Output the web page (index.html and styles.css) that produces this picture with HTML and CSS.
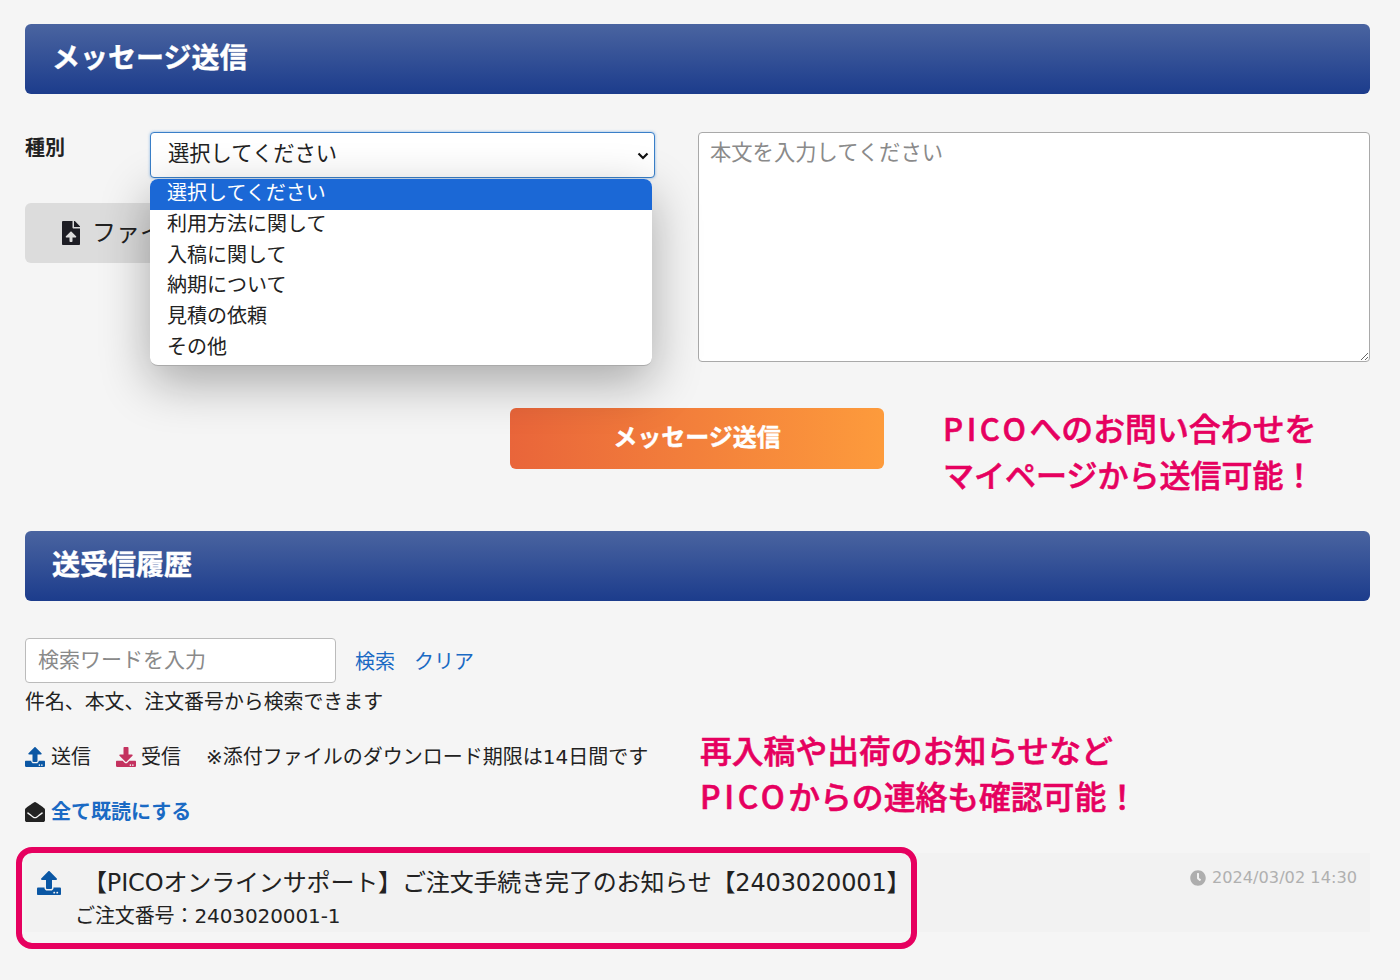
FILE: index.html
```html
<!DOCTYPE html>
<html lang="ja">
<head>
    <meta charset="UTF-8">
    <title>メッセージ送信</title>
    <link rel="stylesheet" href="styles.css">
</head>
<body>
    <!-- icon sprite -->
    <svg class="sprite" xmlns="http://www.w3.org/2000/svg">
        <symbol id="i-upload" viewBox="0 0 512 512"><path d="M296 384h-80c-13.3 0-24-10.7-24-24V192h-87.7c-17.8 0-26.7-21.5-14.1-34.1L242.3 5.7c7.5-7.5 19.8-7.5 27.3 0l152.2 152.2c12.6 12.6 3.7 34.1-14.1 34.1H320v168c0 13.3-10.7 24-24 24zm216-8v112c0 13.3-10.7 24-24 24H24c-13.3 0-24-10.7-24-24V376c0-13.3 10.7-24 24-24h136v8c0 30.9 25.1 56 56 56h80c30.9 0 56-25.1 56-56v-8h136c13.3 0 24 10.7 24 24zm-124 88c0-11-9-20-20-20s-20 9-20 20 9 20 20 20 20-9 20-20zm64 0c0-11-9-20-20-20s-20 9-20 20 9 20 20 20 20-9 20-20z"/></symbol>
        <symbol id="i-download" viewBox="0 0 512 512"><path d="M216 0h80c13.3 0 24 10.7 24 24v168h87.7c17.8 0 26.7 21.5 14.1 34.1L269.7 378.3c-7.5 7.5-19.8 7.5-27.3 0L90.1 226.1c-12.6-12.6-3.7-34.1 14.1-34.1H192V24c0-13.3 10.7-24 24-24zm296 376v112c0 13.3-10.7 24-24 24H24c-13.3 0-24-10.7-24-24V376c0-13.3 10.7-24 24-24h146.7l49 49c20.1 20.1 52.5 20.1 72.6 0l49-49H488c13.3 0 24 10.7 24 24zm-124 88c0-11-9-20-20-20s-20 9-20 20 9 20 20 20 20-9 20-20zm64 0c0-11-9-20-20-20s-20 9-20 20 9 20 20 20 20-9 20-20z"/></symbol>
        <symbol id="i-envelope" viewBox="0 0 512 512"><path d="M512 464c0 26.51-21.49 48-48 48H48c-26.51 0-48-21.49-48-48V200.724a48 48 0 0 1 18.387-37.776c24.913-19.529 45.501-35.365 164.2-121.511C199.412 29.17 232.797-.347 256 .003c23.198-.354 56.596 29.172 73.413 41.433 118.687 86.137 139.303 101.995 164.2 121.512A48 48 0 0 1 512 200.724V464zm-65.666-196.605c-2.563-3.728-7.7-4.595-11.339-1.907-22.845 16.873-55.462 40.705-105.582 77.079-16.825 12.266-50.21 41.781-73.413 41.43-23.211.344-56.559-29.143-73.413-41.43-50.114-36.37-82.734-60.204-105.582-77.079-3.639-2.688-8.776-1.821-11.339 1.907l-9.072 13.196a7.998 7.998 0 0 0 1.839 10.967c22.887 16.899 55.454 40.69 105.303 76.868 20.274 14.781 56.524 47.813 92.264 47.573 35.724.242 71.961-32.771 92.263-47.573 49.85-36.179 82.418-59.97 105.303-76.868a7.998 7.998 0 0 0 1.839-10.967l-9.071-13.196z"/></symbol>
        <symbol id="i-clock" viewBox="0 0 512 512"><path d="M256,8C119,8,8,119,8,256S119,504,256,504,504,393,504,256,393,8,256,8Zm92.49,313h0l-20,25a16,16,0,0,1-22.49,2.5h0l-67-49.72a40,40,0,0,1-15-31.23V112a16,16,0,0,1,16-16h32a16,16,0,0,1,16,16V256l58,42.5A16,16,0,0,1,348.49,321Z"/></symbol>
        <symbol id="i-file" viewBox="0 0 384 512"><path d="M224 136V0H24C10.7 0 0 10.7 0 24v464c0 13.3 10.7 24 24 24h336c13.3 0 24-10.7 24-24V160H248c-13.2 0-24-10.8-24-24zm65.18 216.01H224v80c0 8.84-7.16 16-16 16h-32c-8.84 0-16-7.16-16-16v-80H94.82c-14.28 0-21.41-17.29-11.27-27.36l96.42-95.7c6.65-6.61 17.39-6.61 24.04 0l96.42 95.7c10.15 10.07 3.03 27.36-11.25 27.36zM377 105L279.1 7c-4.5-4.5-10.6-7-17-7H256v128h128v-6.1c0-6.3-2.5-12.4-7-16.9z"/></symbol>
    </svg>

    <div class="container">
        <!-- Send section -->
        <h2 class="section-head">メッセージ送信</h2>
        <div class="form-row">
            <div class="form-left">
                <div class="type-row">
                    <label class="type-label">種別</label>
                    <div class="select-wrap">
                        <select class="type-select">
                            <option>選択してください</option>
                        </select>
                        <svg class="select-arrow" viewBox="0 0 12 8"><path d="M1.5 1.5L6 6l4.5-4.5"/></svg>
                        <ul class="select-menu">
                            <li class="selected">選択してください</li>
                            <li>利用方法に関して</li>
                            <li>入稿に関して</li>
                            <li>納期について</li>
                            <li>見積の依頼</li>
                            <li>その他</li>
                        </ul>
                    </div>
                </div>
                <button class="file-btn" type="button">
                    <svg class="icon-file"><use href="#i-file"/></svg>
                    <span class="file-label">ファイル選択</span>
                </button>
            </div>
            <textarea class="body-input" placeholder="本文を入力してください"></textarea>
        </div>
        <div class="send-row">
            <button class="send-btn" type="button">メッセージ送信</button>
            <p class="note note-send"><span class="note-latin">PICO</span><span class="note-wide">へのお問い合わせを</span><br>マイページから送信可能！</p>
        </div>

        <!-- History section -->
        <div class="history">
            <h2 class="section-head">送受信履歴</h2>
            <p class="note note-history">再入稿や出荷のお知らせなど<br><span class="note-latin">PICO</span>からの連絡も確認可能！</p>
            <div class="search-row">
                <input class="search-input" type="text" placeholder="検索ワードを入力">
                <a class="link" href="#">検索</a>
                <a class="link" href="#">クリア</a>
            </div>
            <p class="help">件名、本文、注文番号から検索できます</p>
            <div class="legend">
                <span class="legend-item"><svg class="icon up"><use href="#i-upload"/></svg>送信</span>
                <span class="legend-item"><svg class="icon down"><use href="#i-download"/></svg>受信</span>
                <span class="legend-item">※添付ファイルのダウンロード期限は14日間です</span>
            </div>
            <a class="read-all" href="#"><svg class="icon envelope"><use href="#i-envelope"/></svg>全て既読にする</a>
            <div class="message">
                <svg class="icon-msg up"><use href="#i-upload"/></svg>
                <div class="message-text">
                    <div class="message-title">【PICOオンラインサポート】ご注文手続き完了のお知らせ【2403020001】</div>
                    <div class="message-order">ご注文番号：2403020001-1</div>
                </div>
                <div class="message-date"><svg class="icon-clock"><use href="#i-clock"/></svg>2024/03/02 14:30</div>
                <div class="highlight"></div>
            </div>
        </div>
    </div>
</body>
</html>
```

FILE: styles.css
```css
* {
    box-sizing: border-box;
}
html, body {
    height: 100%;
}
body {
    margin: 0;
    overflow: hidden;
    background-color: #f5f5f5;
    color: #222222;
    font-family: "DejaVu Sans", "Noto Sans CJK JP", sans-serif;
    font-size: 20px;
}
p {
    margin: 0;
}
ul {
    margin: 0;
    padding: 0;
    list-style: none;
}
.sprite {
    display: none;
}
.container {
    padding: 24px 30px 0 25px;
}
.section-head {
    display: flex;
    align-items: center;
    height: 70px;
    margin: 0;
    padding: 0 0 6px 27px;
    border-radius: 6px;
    background: linear-gradient(#4a64a0, #1c3c8c);
    color: #ffffff;
    font-size: 28px;
    font-weight: bold;
    -webkit-text-stroke: 0.4px #ffffff;
}

/* form */
.form-row {
    display: grid;
    grid-template-columns: 630px 1fr;
    gap: 43px;
    height: 230px;
    margin-top: 38px;
}
.type-row {
    display: flex;
}
.type-label {
    width: 125px;
    padding-top: 1px;
    font-weight: bold;
    line-height: 30px;
}
.select-wrap {
    position: relative;
    width: 505px;
}
.type-select {
    width: 100%;
    height: 46px;
    padding: 0 0 3px 17px;
    border: 1px solid #3a7fc8;
    border-radius: 4px;
    outline: none;
    box-shadow: 0 0 3px rgba(60, 140, 220, 0.6);
    background-color: #ffffff;
    color: #222222;
    font-family: inherit;
    font-size: 21.3px;
    appearance: none;
}
.select-arrow {
    position: absolute;
    top: 20px;
    right: 6px;
    width: 12px;
    height: 8px;
    fill: none;
    stroke: #111111;
    stroke-width: 2.2px;
}
.select-menu {
    position: absolute;
    z-index: 5;
    top: 47px;
    left: 0;
    width: 502px;
    height: 187px;
    overflow: hidden;
    border-bottom: 1px solid #aaaaaa;
    border-radius: 8px;
    background-color: #ffffff;
    box-shadow: 0 16px 50px rgba(0, 0, 0, 0.32);
}
.select-menu li {
    height: 30.8px;
    padding-left: 17px;
    font-size: 20px;
    line-height: 28px;
}
.select-menu .selected {
    background-color: #1b68d6;
    color: #ffffff;
}
.file-btn {
    display: flex;
    align-items: center;
    gap: 12px;
    width: 300px;
    height: 60px;
    margin-top: 25px;
    padding-left: 37px;
    border: none;
    border-radius: 6px;
    background-color: #dcdcdc;
    color: #222222;
    font-family: inherit;
    font-size: 24px;
}
.file-label {
    margin-top: -6px;
}
.icon-file {
    width: 18px;
    height: 24px;
    fill: #1d1d24;
}
.body-input {
    width: 100%;
    height: 230px;
    padding: 2px 11px;
    border: 1px solid #a9a9a9;
    border-radius: 4px;
    background-color: #ffffff;
    font-family: inherit;
    font-size: 21.3px;
}
.body-input::placeholder,
.search-input::placeholder {
    color: #8a8a8a;
}
.send-row {
    display: flex;
    gap: 60px;
    height: 61px;
    margin-top: 46px;
    padding-left: 485px;
}
.send-btn {
    width: 374px;
    height: 61px;
    padding: 0 0 6px;
    border: none;
    border-radius: 6px;
    background: linear-gradient(90deg, #e9653a, #fd9b3c);
    color: #ffffff;
    font-family: inherit;
    font-size: 24px;
    font-weight: bold;
    -webkit-text-stroke: 0.4px #ffffff;
}
.note {
    color: #e6005f;
    font-family: "Noto Sans CJK JP", sans-serif;
    font-size: 31px;
    font-weight: 500;
    line-height: 46px;
    white-space: nowrap;
    -webkit-text-stroke: 0.6px #e6005f;
}
.note-latin {
    letter-spacing: 3.6px;
}
.note-wide {
    font-size: 31.9px;
}
.note-send {
    margin: -4px 0 0 -1px;
}

/* history */
.history {
    position: relative;
    margin-top: 62px;
}
.note-history {
    position: absolute;
    top: 195px;
    left: 675px;
    font-size: 31.8px;
}
.search-row {
    display: flex;
    align-items: center;
    gap: 19px;
    margin-top: 37px;
}
.search-input {
    width: 311px;
    height: 45px;
    padding: 0 12px 2px;
    border: 1px solid #bbbbbb;
    border-radius: 4px;
    background-color: #ffffff;
    font-family: inherit;
    font-size: 21px;
}
.link {
    color: #1a6ac4;
    text-decoration: none;
}
.help {
    margin-top: 5px;
    font-size: 19.9px;
    line-height: 30px;
}
.legend {
    display: flex;
    gap: 25px;
    margin-top: 24px;
    line-height: 30px;
}
.legend-item {
    display: flex;
    align-items: center;
    gap: 6px;
}
.legend-item + .legend-item {
    gap: 5px;
}
.icon {
    width: 20px;
    height: 20px;
}
.up {
    fill: #0b57a4;
}
.down {
    fill: #c4325f;
}
.envelope {
    fill: #222222;
}
.read-all {
    display: flex;
    align-items: center;
    gap: 6px;
    margin-top: 25px;
    color: #1a6ac4;
    font-weight: bold;
    line-height: 30px;
    text-decoration: none;
}
.message {
    position: relative;
    display: flex;
    height: 79px;
    margin-top: 26px;
    padding: 15px 13px 0 12px;
    background-color: #f2f2f2;
}
.icon-msg {
    flex: none;
    width: 24px;
    height: 24px;
    margin-top: 3px;
}
.message-text {
    flex: 1;
    min-width: 0;
    margin-left: 14px;
}
.message-title {
    margin-left: 8px;
    font-size: 24px;
    line-height: 30px;
    white-space: nowrap;
    letter-spacing: -0.15px;
}
.message-order {
    margin-top: 3px;
    line-height: 30px;
    letter-spacing: -0.1px;
}
.message-date {
    display: flex;
    align-items: flex-start;
    gap: 6px;
    color: #b0b0b0;
    font-size: 16.2px;
    line-height: 20px;
    white-space: nowrap;
}
.icon-clock {
    width: 16px;
    height: 16px;
    margin-top: 2px;
    fill: #aeaeae;
}
.highlight {
    position: absolute;
    top: -6px;
    left: -9px;
    width: 901px;
    height: 102px;
    border: 6px solid #e6005f;
    border-radius: 16px;
    pointer-events: none;
}
```
